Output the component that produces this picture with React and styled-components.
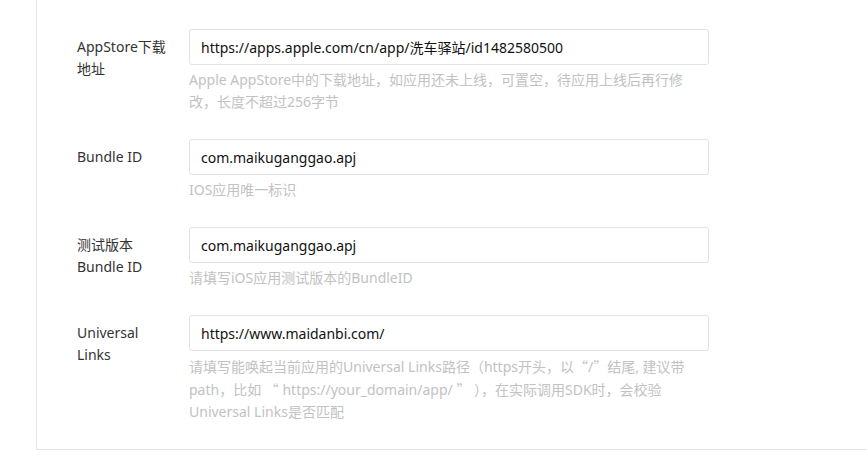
import React from "react";
import styled, { createGlobalStyle } from "styled-components";

const GlobalStyle = createGlobalStyle`
  html, body {
    margin: 0;
    padding: 0;
    background: #fff;
  }
  body {
    font-family: "Noto Sans", "Noto Sans CJK SC", sans-serif;
    font-size: 14px;
    color: #333;
  }
`;

const Page = styled.div`
  padding-left: 36px;
  height: 455px;
  box-sizing: border-box;
`;

const Panel = styled.div`
  border-left: 1px solid #e6e6e6;
  border-bottom: 1px solid #e6e6e6;
  padding: 29px 0 26px 40px;
`;

const Row = styled.div`
  display: flex;
  align-items: flex-start;
  margin-bottom: 26px;
  &:last-child {
    margin-bottom: 0;
  }
`;

const Label = styled.label`
  width: 92px;
  flex-shrink: 0;
  margin-right: 20px;
  padding-top: 7px;
  line-height: 22px;
  color: #333;
`;

const Field = styled.div`
  width: 520px;
  display: flex;
  flex-direction: column;
`;

const Input = styled.input`
  box-sizing: border-box;
  width: 100%;
  height: 36px;
  border: 1px solid #e2e2e2;
  border-radius: 3px;
  padding: 0 11px;
  font-family: inherit;
  font-size: 14px;
  color: #111;
  outline: none;
`;

const Help = styled.div`
  margin-top: 4px;
  line-height: 22px;
  color: #c2c2c2;
  white-space: nowrap;
`;

// full-width quotes, drawn by the CJK face like in the original
const Quote = styled.span`
  font-family: "Noto Sans CJK SC", sans-serif;
`;

const withQuotes = (line) =>
  line.split(/([“”])/).map((part, i) =>
    part === "“" || part === "”" ? <Quote key={i}>{part}</Quote> : part
  );

const rows = [
  {
    label: "AppStore下载地址",
    value: "https://apps.apple.com/cn/app/洗车驿站/id1482580500",
    help: [
      "Apple AppStore中的下载地址，如应用还未上线，可置空，待应用上线后再行修",
      "改，长度不超过256字节",
    ],
  },
  {
    label: "Bundle ID",
    value: "com.maikuganggao.apj",
    help: ["IOS应用唯一标识"],
  },
  {
    label: "测试版本 Bundle ID",
    value: "com.maikuganggao.apj",
    help: ["请填写iOS应用测试版本的BundleID"],
  },
  {
    label: "Universal Links",
    value: "https://www.maidanbi.com/",
    help: [
      "请填写能唤起当前应用的Universal Links路径（https开头，以“/”结尾, 建议带",
      "path，比如 “ https://your_domain/app/ ” ），在实际调用SDK时，会校验",
      "Universal Links是否匹配",
    ],
  },
];

export default function App() {
  return (
    <Page>
      <GlobalStyle />
      <Panel>
        {rows.map((r) => (
          <Row key={r.label}>
            <Label>{r.label}</Label>
            <Field>
              <Input defaultValue={r.value} />
              <Help>
                {r.help.map((line, i) => (
                  <div key={i}>{withQuotes(line)}</div>
                ))}
              </Help>
            </Field>
          </Row>
        ))}
      </Panel>
    </Page>
  );
}
